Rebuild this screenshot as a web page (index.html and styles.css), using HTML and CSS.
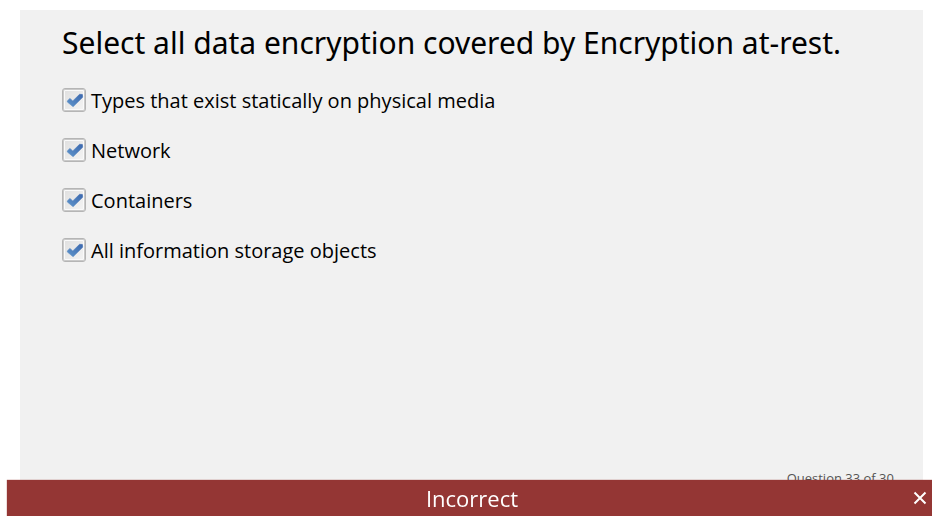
FILE: index.html
```html
<!DOCTYPE html>
<html lang="en">
<head>
<meta charset="utf-8">
<title>Question 33 of 30</title>
<link rel="stylesheet" href="styles.css">
</head>
<body>
<svg class="defs" aria-hidden="true">
  <defs>
    <linearGradient id="blue" x1="0" y1="1" x2="1" y2="0">
      <stop offset="0" stop-color="#5f95cb"/>
      <stop offset="1" stop-color="#3c68ae"/>
    </linearGradient>
    <symbol id="check" viewBox="0 0 24 24">
      <path d="M5.3 12.9 L7.9 10.4 L10.8 12.9 L17.6 6.3 L20.4 6.5 L20.7 9.2 L11.1 18.7 L5.4 14.1 Z" fill="url(#blue)" stroke="url(#blue)" stroke-width="0.6" stroke-linejoin="round"/>
    </symbol>
  </defs>
</svg>
<main class="question">
  <form>
    <fieldset class="choices">
      <legend class="title">Select all data encryption covered by Encryption at-rest.</legend>
      <label class="choice"><span class="box"><input type="checkbox" checked><svg class="mark" aria-hidden="true"><use href="#check"/></svg></span><span class="text">Types that exist statically on physical media</span></label>
      <label class="choice"><span class="box"><input type="checkbox" checked><svg class="mark" aria-hidden="true"><use href="#check"/></svg></span><span class="text">Network</span></label>
      <label class="choice"><span class="box"><input type="checkbox" checked><svg class="mark" aria-hidden="true"><use href="#check"/></svg></span><span class="text">Containers</span></label>
      <label class="choice"><span class="box"><input type="checkbox" checked><svg class="mark" aria-hidden="true"><use href="#check"/></svg></span><span class="text">All information storage objects</span></label>
    </fieldset>
  </form>
  <p class="progress">Question 33 of 30</p>
</main>
<div class="feedback" role="status">
  <span class="result">Incorrect</span>
  <button class="close" type="button" aria-label="Close">
    <svg viewBox="0 0 14 14" aria-hidden="true"><path d="M1.5 1.5 L12.5 12.5 M12.5 1.5 L1.5 12.5"/></svg>
  </button>
</div>
</body>
</html>
```
FILE: styles.css
```css
* {
  box-sizing: border-box;
}

body {
  margin: 0;
  min-height: 100vh;
  padding: 10px 9px 0 20px;
  display: flex;
  background: #fff;
  color: #000;
  font-family: "Open Sans", "Noto Sans", sans-serif;
}

.defs {
  position: absolute;
  width: 0;
  height: 0;
}

.question {
  flex: 1;
  display: flex;
  flex-direction: column;
  justify-content: space-between;
  padding: 8px 29px 28px 42px;
  background: #f1f1f1;
}

.choices {
  margin: 0;
  padding: 0;
  border: 0;
  min-width: 0;
}

.title {
  padding: 0;
  margin-bottom: 7px;
  font-family: "Noto Sans", "Open Sans", sans-serif;
  font-size: 30px;
  font-weight: 400;
  line-height: 50px;
}

.choice {
  display: flex;
  align-items: center;
  gap: 5px;
  width: fit-content;
  height: 50px;
  font-size: 20px;
  line-height: 26px;
}

.text {
  padding-top: 2px;
}

.box {
  display: grid;
  width: 24px;
  height: 24px;
}

.box > * {
  grid-area: 1 / 1;
}

.box input {
  appearance: none;
  width: 24px;
  height: 24px;
  margin: 0;
  border: 1px solid #b5b5b5;
  border-radius: 3px;
  background: linear-gradient(135deg, #dfdfdf, #f5f5f5);
  box-shadow: inset 0 0 0 1px #c9c9c9, inset 0 0 0 2px #fafafa;
}

.mark {
  width: 24px;
  height: 24px;
  pointer-events: none;
  visibility: hidden;
}

.box input:checked + .mark {
  visibility: visible;
}

.progress {
  margin: 0;
  text-align: right;
  color: #555;
  font-size: 13px;
  line-height: 20px;
}

.feedback {
  position: fixed;
  left: 7px;
  right: 0;
  bottom: 0;
  display: grid;
  grid-template-columns: 1fr auto 1fr;
  align-items: center;
  height: 36px;
  padding-left: 5px;
  background: #943634;
  box-shadow: 0 0 1px #943634;
  color: #fff;
}

.result {
  grid-column: 2;
  font-size: 22px;
  line-height: 36px;
}

.close {
  justify-self: end;
  display: flex;
  margin-right: 5px;
  padding: 0;
  border: 0;
  background: none;
  cursor: pointer;
}

.close svg {
  width: 14px;
  height: 14px;
  fill: none;
  stroke: #fff;
  stroke-width: 2;
}
```
